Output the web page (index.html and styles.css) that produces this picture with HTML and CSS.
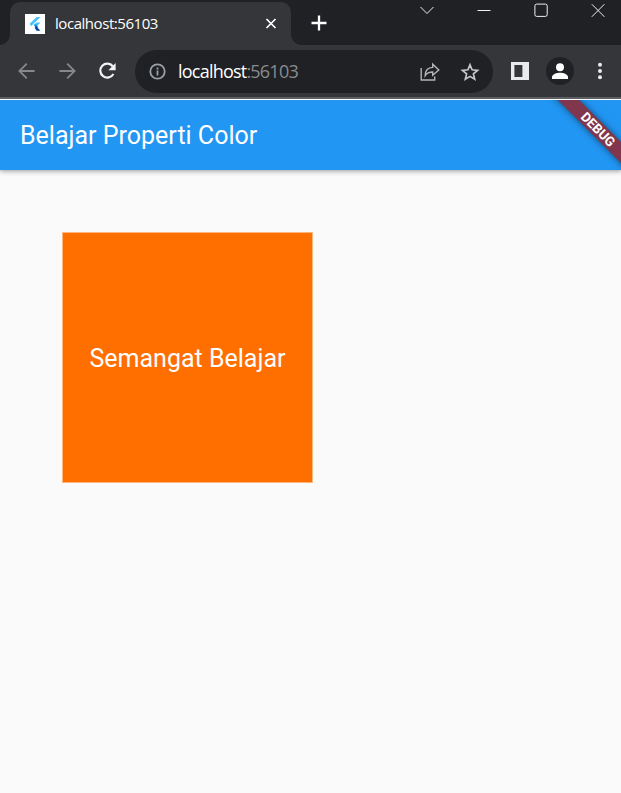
FILE: index.html
```html
<!DOCTYPE html>
<html lang="id">
<head>
<meta charset="utf-8">
<title>localhost:56103</title>
<link rel="stylesheet" href="styles.css">
</head>
<body>
<header class="strip">
  <div class="tab">
    <svg class="favicon" width="20" height="20" viewBox="0 0 20 20"><path fill="#fff" d="M0 0h20v20H0z"/><path fill="#47c5fb" d="M11.5 3h4L6.4 12l-2-2zM11.5 8.6h4l-4.4 4.4-2.2-2.2z"/><path fill="#1684d8" d="M8.9 10.8l2.2-.2 2.1 2.4-2.1 2z"/><path fill="#004a9e" d="M9.6 13.6l1.8-1.2 4.1 4.3h-4z"/></svg>
    <span class="tab-title">localhost:56103</span>
    <svg class="tab-close" width="12" height="12" viewBox="0 0 12 12"><path d="M1.5 1l9 9M10.5 1l-9 9"/></svg>
  </div>
  <svg class="new-tab" width="16" height="16" viewBox="0 0 16 16"><path d="M8 .5v15M.5 8h15"/></svg>
  <div class="window-controls">
    <svg width="14" height="14" viewBox="0 0 14 14"><path d="M.5 4l6.5 6.5L13.5 4"/></svg>
    <svg width="14" height="14" viewBox="0 0 14 14"><path d="M.5 7.5h13"/></svg>
    <svg width="14" height="14" viewBox="0 0 14 14"><rect x=".9" y="1.1" width="12.3" height="12.3" rx="1.8"/></svg>
    <svg width="14" height="14" viewBox="0 0 14 14"><path d="M.8 1.2l12.6 12.6M13.4 1.2L.8 13.8"/></svg>
  </div>
</header>
<nav class="toolbar">
  <svg class="dim" width="18" height="18" viewBox="0 0 18 18"><path d="M16.6 9H1.6M8.8 1.6L1.4 9l7.4 7.4"/></svg>
  <svg class="dim forward" width="18" height="18" viewBox="0 0 18 18"><path d="M.4 9h15M8.2 1.6L15.6 9l-7.4 7.4"/></svg>
  <svg class="reload" width="20" height="18" viewBox="0 0 20 18"><path class="arc" d="M14.8 4.2A7 7 0 1 0 15.4 12"/><path class="tip" d="M17.6 1v7.2h-7.2z"/></svg>
  <div class="address">
    <svg class="info" width="17" height="17" viewBox="0 0 17 17"><circle cx="8.5" cy="8.5" r="7.2"/><path d="M8.5 7.6v4.8M8.5 4.4v2"/></svg>
    <span class="url">localhost<span class="port">:56103</span></span>
    <svg class="share" width="20" height="20" viewBox="0 0 20 20"><path d="M1.2 6v12h13.5v-3.5M5.2 13.5C5.3 8.5 8 5.6 12.7 5.4V2.2L18.8 8l-6.1 5.3V10C9.5 10 7 10.8 5.2 13.5z"/></svg>
    <svg class="star" width="20" height="20" viewBox="0 0 20 20"><path d="M10 2.8l2.1 5 5.5.5-4.2 3.6 1.3 5.4-4.7-2.9-4.7 2.9 1.3-5.4-4.2-3.6 5.5-.5z"/></svg>
  </div>
  <svg class="panel" width="18" height="18" viewBox="0 0 18 18"><path fill="#e8eaed" fill-rule="evenodd" d="M0 0h18v18H0zM3.4 3v12h8V3z"/></svg>
  <svg class="profile" width="28" height="28" viewBox="0 0 28 28"><circle cx="14" cy="14" r="14" fill="#202124"/><circle cx="14" cy="10.3" r="4" fill="#fff"/><path fill="#fff" d="M6 22v-2c0-2.8 5-4.3 8-4.3s8 1.5 8 4.3v2z"/></svg>
  <svg class="more" width="4" height="18" viewBox="0 0 4 18"><g fill="#e8eaed"><circle cx="2" cy="2.8" r="2"/><circle cx="2" cy="9" r="2"/><circle cx="2" cy="15.2" r="2"/></g></svg>
</nav>
<main class="app">
  <div class="app-bar"><h1>Belajar Properti Color</h1></div>
  <div class="box">Semangat Belajar</div>
  <div class="banner">DEBUG</div>
</main>
</body>
</html>
```
FILE: styles.css
```css
* { box-sizing: border-box; }
body {
  margin: 0;
  height: 793px;
  display: flex;
  flex-direction: column;
  background: #fafafa;
  overflow: hidden;
}
svg { flex: none; display: block; fill: none; }
.strip {
  height: 45px;
  flex: none;
  display: flex;
  align-items: flex-start;
  padding: 2px 15px 0 10px;
  background: #202124;
}
.tab {
  position: relative;
  width: 281px;
  height: 43px;
  display: flex;
  align-items: center;
  padding: 0 14px 0 15px;
  border-radius: 10px 10px 0 0;
  background: #35363a;
}
.tab::before, .tab::after {
  content: "";
  position: absolute;
  bottom: 0;
  width: 10px;
  height: 10px;
}
.tab::before { left: -10px; background: radial-gradient(circle at 0 0, transparent 9.5px, #35363a 10px); }
.tab::after { right: -10px; background: radial-gradient(circle at 100% 0, transparent 9.5px, #35363a 10px); }
.tab-title {
  flex: 1;
  margin-left: 10px;
  padding-bottom: 2px;
  font: 15px/20px "Open Sans", "Noto Sans", sans-serif;
  letter-spacing: -0.45px;
  color: #fff;
}
.tab-close { stroke: #fff; stroke-width: 1.7; }
.new-tab { margin: 13px 0 0 20px; stroke: #fff; stroke-width: 2.3; }
.window-controls {
  margin: 1px 0 0 93px;
  display: flex;
  gap: 43px;
  stroke: #f1f1f1;
  stroke-width: 1;
}
.toolbar {
  height: 55px;
  flex: none;
  display: flex;
  align-items: center;
  padding: 0 19px 2px 18px;
  background: #35363a;
  border-bottom: 1px solid #fff;
  box-shadow: inset 0 -2px #5f6064;
}
.dim { stroke: #86888a; stroke-width: 1.8; }
.forward { margin-left: 23px; }
.reload { margin-left: 21px; }
.arc { stroke: #f1f3f4; stroke-width: 2.2; }
.tip { fill: #f1f3f4; }
.address {
  width: 358px;
  height: 43px;
  margin: 1px 0 0 17px;
  padding: 0 13px 0 14px;
  display: flex;
  align-items: center;
  border-radius: 22px;
  background: #202124;
}
.info { stroke: #9aa0a6; stroke-width: 1.8; }
.url {
  flex: 1;
  margin-left: 12px;
  padding-bottom: 2px;
  font: 18px/24px "Open Sans", "Noto Sans", sans-serif;
  letter-spacing: -0.78px;
  color: #fff;
}
.port { color: #898c90; }
.share { stroke: #b2b4b6; stroke-width: 1.4; }
.star { margin-left: 20px; stroke: #c4c6c8; stroke-width: 1.7; }
.panel { margin-left: 18px; }
.profile { margin-left: 17px; }
.more { margin-left: 24px; }
.app {
  position: relative;
  flex: 1;
  overflow: hidden;
  background: #fafafa;
}
.app-bar {
  height: 70px;
  display: flex;
  align-items: center;
  padding: 2px 0 0 20px;
  background: #2196f3;
  box-shadow: 0 1px 5px rgba(0, 0, 0, 0.4);
}
h1 { margin: 0; font: 400 25px/30px Roboto, sans-serif; color: #fff; }
.box {
  width: 251px;
  height: 251px;
  margin: 62px 0 0 62px;
  padding-top: 2px;
  display: flex;
  align-items: center;
  justify-content: center;
  border: 1px solid #ffb77e;
  background: #ff6f00;
  color: #fff;
  font: 25px/30px Roboto, sans-serif;
}
.banner {
  position: absolute;
  left: 538px;
  top: 22px;
  width: 120px;
  height: 15px;
  transform: rotate(45deg);
  background: #80364c;
  box-shadow: 0 0 7px rgba(0, 0, 0, 0.5);
  color: #fff;
  font: 700 13.2px/15px Roboto, sans-serif;
  text-align: center;
}
```
